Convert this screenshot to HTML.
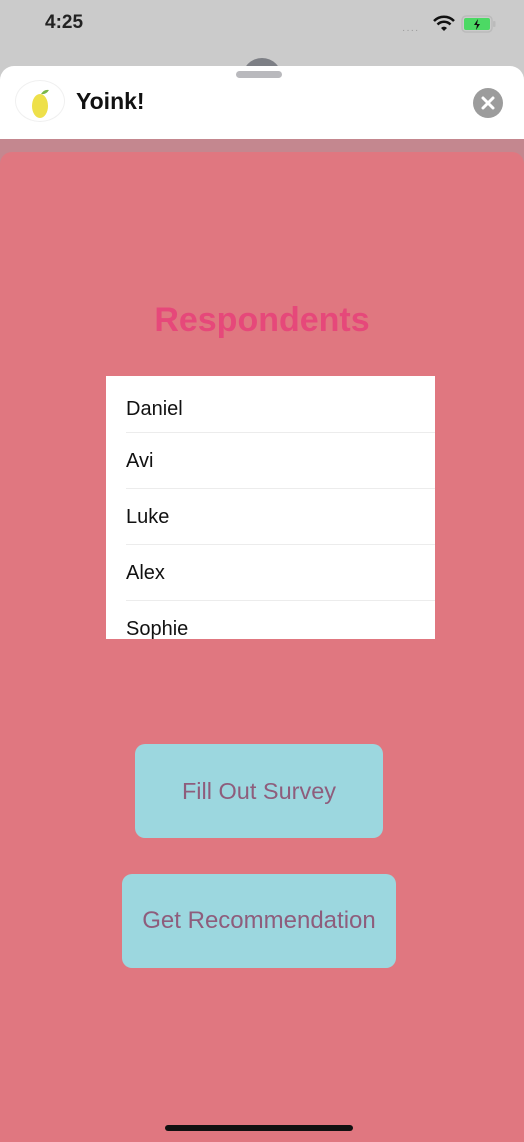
<!DOCTYPE html>
<html><head><meta charset="utf-8"><style>
*{margin:0;padding:0;box-sizing:border-box}
body{width:524px;height:1142px;overflow:hidden;background:#cbcbcb;font-family:"Liberation Sans",sans-serif;position:relative}
.abs{position:absolute}
.row{margin-left:20px;border-top:1px solid #ececec;height:56px;line-height:56px}
</style></head><body>
<div class="abs" style="left:45px;top:12px;font-size:19px;font-weight:bold;color:#222">4:25</div>
<div class="abs" style="left:402px;top:25px;font-size:10px;color:#999;letter-spacing:1px">····</div>
<svg class="abs" style="left:433px;top:15px" width="22" height="18" viewBox="0 0 22 18"><path d="M1 6a14 14 0 0 1 20 0" stroke="#111" stroke-width="2.5" fill="none"/><path d="M4.5 9.5a9 9 0 0 1 13 0" stroke="#111" stroke-width="2.5" fill="none"/><path d="M8 13a4 4 0 0 1 6 0L11 16z" fill="#111"/></svg>
<svg class="abs" style="left:461px;top:15px" width="36" height="18" viewBox="0 0 36 18"><rect x="1" y="1" width="30" height="16" rx="4" fill="none" stroke="#bbb" stroke-width="1.5"/><rect x="3" y="3" width="26" height="12" rx="2" fill="#4cd964"/><rect x="32" y="6" width="2.5" height="6" rx="1" fill="#bbb"/><path d="M17 4l-4 6h3l-1 5 4-6h-3z" fill="#111"/></svg>
<div class="abs" style="left:242px;top:58px;width:40px;height:20px;border-radius:20px 20px 0 0;background:#7d7f85"></div>
<div class="abs" style="left:0;top:66px;width:524px;height:80px;background:#fff;border-radius:14px 14px 0 0"></div>
<div class="abs" style="left:236px;top:71px;width:46px;height:7px;border-radius:4px;background:#b9b9bd"></div>
<div class="abs" style="left:15px;top:80px;width:50px;height:42px;border-radius:50%;border:1px solid #f0f0f0"></div>
<svg class="abs" style="left:29px;top:85px" width="22" height="36" viewBox="0 0 22 36"><ellipse cx="11" cy="21" rx="8" ry="12" fill="#eee04a"/><path d="M12 9q3-5 8-4q-3 5-8 4z" fill="#7ab648"/></svg>
<div class="abs" style="left:76px;top:88px;font-size:23px;font-weight:bold;color:#111">Yoink!</div>
<svg class="abs" style="left:472px;top:87px" width="32" height="32" viewBox="0 0 32 32"><circle cx="16" cy="16" r="15" fill="#9c9c9c"/><path d="M11 11l10 10M21 11l-10 10" stroke="#fff" stroke-width="3" stroke-linecap="round"/></svg>
<div class="abs" style="left:0;top:139px;width:524px;height:1003px;background:#c4878f"></div>
<div class="abs" style="left:0;top:152px;width:524px;height:990px;background:#e07780;border-radius:12px 12px 0 0"></div>
<div class="abs" style="left:0;top:301px;width:524px;text-align:center;font-size:34px;font-weight:bold;color:#e6487a">Respondents</div>
<div class="abs" style="left:106px;top:376px;width:329px;height:263px;background:#fff;overflow:hidden;font-size:20px;color:#111">
<div style="height:56px;line-height:58px;padding-left:20px;padding-top:4px">Daniel</div>
<div class="row">Avi</div>
<div class="row">Luke</div>
<div class="row">Alex</div>
<div class="row">Sophie</div>
</div>
<div class="abs" style="left:135px;top:744px;width:248px;height:94px;background:#9cd7df;border-radius:10px;text-align:center;line-height:94px;font-size:23.5px;color:#8e5d7c">Fill Out Survey</div>
<div class="abs" style="left:122px;top:874px;width:274px;height:94px;background:#9cd7df;border-radius:10px;text-align:center;line-height:94px;font-size:24px;color:#8e5d7c;white-space:nowrap">Get Recommendation</div>
<div class="abs" style="left:165px;top:1125px;width:188px;height:6px;border-radius:3px;background:#111"></div>
</body></html>
